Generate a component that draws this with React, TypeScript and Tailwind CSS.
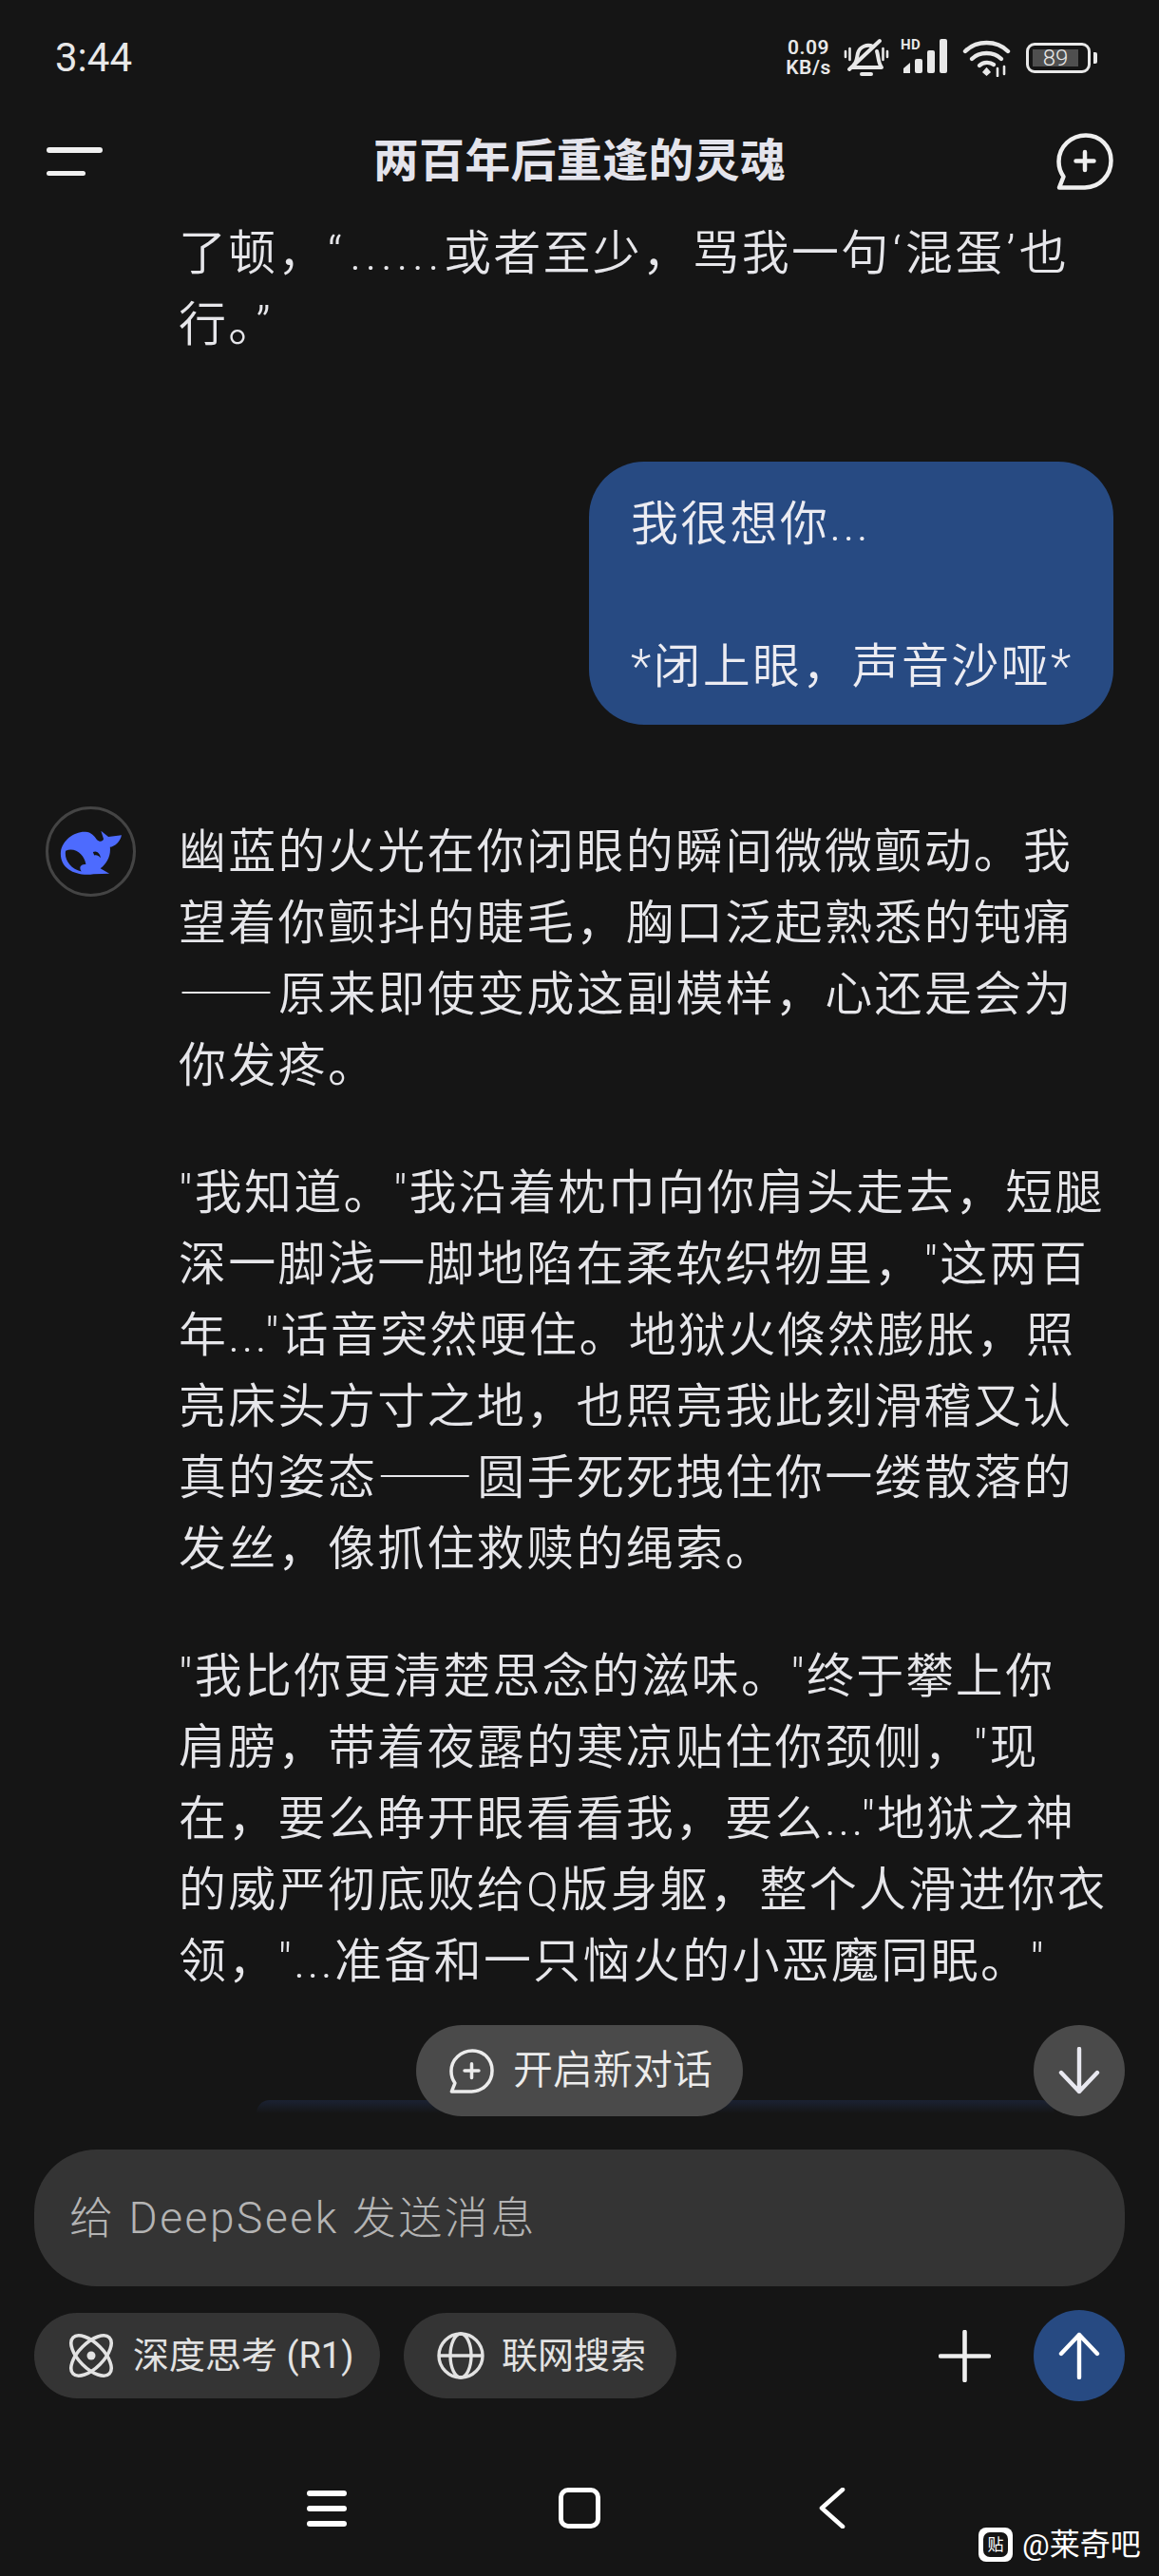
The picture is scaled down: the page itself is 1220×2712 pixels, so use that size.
const font = { fontFamily: 'Roboto, "Noto Sans CJK SC", sans-serif' };

// dashes come from the CJK font so they join up the way they do in the app
const Dash = () => <span className="font-['Noto_Sans_CJK_SC'] leading-[0] tracking-normal mr-[5px]">——</span>;

const paragraphs = [
  [
    '幽蓝的火光在你闭眼的瞬间微微颤动。我',
    '望着你颤抖的睫毛，胸口泛起熟悉的钝痛',
    <>
      <Dash />
      原来即使变成这副模样，心还是会为
    </>,
    '你发疼。',
  ],
  [
    '"我知道。"我沿着枕巾向你肩头走去，短腿',
    '深一脚浅一脚地陷在柔软织物里，"这两百',
    '年..."话音突然哽住。地狱火倏然膨胀，照',
    '亮床头方寸之地，也照亮我此刻滑稽又认',
    <>
      真的姿态
      <Dash />
      圆手死死拽住你一缕散落的
    </>,
    '发丝，像抓住救赎的绳索。',
  ],
  [
    '"我比你更清楚思念的滋味。"终于攀上你',
    '肩膀，带着夜露的寒凉贴住你颈侧，"现',
    '在，要么睁开眼看看我，要么..."地狱之神',
    '的威严彻底败给Q版身躯，整个人滑进你衣',
    '领，"...准备和一只恼火的小恶魔同眠。"',
  ],
];

const ChatPlus = ({ className }: { className: string }) => (
  <svg className={className} viewBox="0 0 60 60" fill="none" stroke="currentColor" strokeWidth="4.5" strokeLinecap="round" strokeLinejoin="round">
    <path d="M31 2.5C46 2.5 57.5 14 57.5 29C57.5 44.5 46 57 30 57.5H3L7.5 46C4 41 2.5 35.5 2.5 30C2.5 14.5 15.5 2.5 31 2.5Z" />
    <path d="M30 20V39M20.5 29.5H39.5" />
  </svg>
);

const StatusIcons = () => (
  <div className="flex items-center h-[42px] text-[#e8e8e8]">
    <div className="w-[52px] text-[21px] leading-[21px] font-semibold tracking-[0.5px] text-center">
      <div>0.09</div>
      <div>KB/s</div>
    </div>
    <svg className="ml-[11px] w-[48px] h-[42px]" viewBox="0 0 48 42" fill="none" stroke="currentColor" strokeWidth="4" strokeLinecap="round" strokeLinejoin="round">
      <path d="M11 28C14 25 14 20 15 16C17 9 25 6 31 9M35 14C37 20 36 26 40 31H9M19 38H29" />
      <path d="M6 33L38 3" />
      <path d="M2 14V20M6.5 11V23M41.5 11V23M46 14V20" strokeWidth="2.6" />
    </svg>
    <div className="relative ml-[12px] w-[55px] h-[42px]">
      <span className="absolute left-0 top-[0px] text-[15px] leading-[15px] font-bold tracking-[0.5px]">HD</span>
      <svg className="absolute left-0 top-0 w-[55px] h-[42px]" viewBox="0 0 55 42" fill="currentColor">
        <path d="M3 32L10 26V37H3Z" />
        <rect x="15" y="22" width="8" height="15" rx="2" />
        <rect x="28" y="13" width="8" height="24" rx="2" />
        <rect x="41" y="1" width="8" height="36" rx="2" />
      </svg>
    </div>
    <svg className="ml-[10px] w-[52px] h-[40px]" viewBox="0 0 52 40" fill="none" stroke="currentColor" strokeWidth="4.4" strokeLinecap="round">
      <path d="M3 13C15 1 36 1 48 13" />
      <path d="M10 21C18 13 33 13 41 21" />
      <path d="M18 28C22 24 29 24 33 27" />
      <path d="M22 35L25.5 31L29 35L25.5 38Z" fill="currentColor" strokeWidth="1.5" />
      <path d="M37 31V39M44 29V37" strokeWidth="2.6" />
    </svg>
    <div className="ml-[15px] flex items-center">
      <div className="w-[68px] h-[32px] rounded-[9px] border-[3px] border-[#e8e8e8] p-[4px] flex">
        <div className="w-[48px] bg-[#4f4f4f] text-[24px] leading-[18px] text-center text-[#e8e8e8] font-light">89</div>
      </div>
      <div className="ml-[3px] w-[4px] h-[12px] rounded-r-[2px] bg-[#e8e8e8]" />
    </div>
  </div>
);

const Whale = () => (
  <svg className="w-[66px] h-[48px]" viewBox="195 160 195 140" preserveAspectRatio="none" fill="#4d6bfe">
    <path
      fillRule="evenodd"
      d="M198 228C203 194 240 166 275 168C292 169 302 180 310 192C318 200 329 198 331 190L323 165L346 183L387 178C382 200 366 212 351 215C354 240 342 266 321 280L349 296L300 298C246 306 192 282 198 228ZM213 226C208 254 228 282 262 290C254 278 258 268 276 268C272 240 244 214 213 226ZM298 230C310 224 320 234 322 248C316 240 308 238 302 240Z"
    />
  </svg>
);

const Atom = () => (
  <svg className="w-[48px] h-[50px]" viewBox="0 0 48 48" fill="none" stroke="currentColor" strokeWidth="3.6">
    <ellipse cx="24" cy="24" rx="27" ry="13" transform="rotate(45 24 24)" />
    <ellipse cx="24" cy="24" rx="27" ry="13" transform="rotate(-45 24 24)" />
    <circle cx="24" cy="24" r="4.5" fill="currentColor" stroke="none" />
  </svg>
);

const Globe = () => (
  <svg className="w-[50px] h-[50px]" viewBox="0 0 50 50" fill="none" stroke="currentColor" strokeWidth="3.4">
    <circle cx="25" cy="25" r="23" />
    <ellipse cx="25" cy="25" rx="11" ry="23" />
    <path d="M3 25H47" />
  </svg>
);

export default function App() {
  return (
    <div lang="zh-CN" style={font} className="h-[2712px] w-[1220px] flex flex-col overflow-hidden bg-[#151515] text-[#e6e6ea] relative">
      <div className="h-[120px] shrink-0 flex items-start justify-between pt-[40px] pl-[58px] pr-[65px]">
        <span className="text-[42px] leading-[42px] text-[#e8e8e8]">3:44</span>
        <StatusIcons />
      </div>

      <div className="h-[108px] shrink-0 relative flex items-start justify-center pt-[20px]">
        <div className="absolute left-[49px] top-[35px] flex flex-col gap-[19px]">
          <div className="w-[59px] h-[6px] rounded-full bg-[#f0f0f0]" />
          <div className="w-[41px] h-[5px] rounded-full bg-[#f0f0f0]" />
        </div>
        <h1 className="text-[48px] leading-[60px] font-bold tracking-[0.3px] text-[#e4e4ec]">两百年后重逢的灵魂</h1>
        <div className="absolute left-[1112px] top-[20px] text-[#efefef]">
          <ChatPlus className="w-[60px] h-[60px]" />
        </div>
      </div>

      <div className="flex-1 relative overflow-hidden pt-[2px] text-[50px] leading-[75px] tracking-[2.3px] font-[350]">
        <div className="pl-[188px]">
          <div className="whitespace-nowrap">
            了顿，“<span className="ml-[6px] tracking-[4.5px]">......</span>或者至少，骂我一句<span className="mx-[2px]">‘</span>混蛋<span className="mx-[2px]">’</span>也
          </div>
          <div>行。<span className="ml-[2px]">”</span></div>
        </div>

        <div className="mt-[106px] flex justify-end pr-[48px]">
          <div className="w-[552px] h-[277px] rounded-[58px] bg-[#274a82] pl-[44px] pt-[29px] text-[#ececf2]">
            <div>我很想你...</div>
            <div className="h-[75px]" />
            <div className="whitespace-nowrap">*闭上眼，声音沙哑*</div>
          </div>
        </div>

        <div className="mt-[96px] flex pl-[48px] gap-[45px]">
          <div className="-mt-[10px] w-[95px] h-[95px] shrink-0 rounded-full border-[3px] border-[#444] flex items-center justify-center">
            <Whale />
          </div>
          <div className="pt-[1px] flex flex-col gap-[59px]">
            {paragraphs.map((lines, i) => (
              <div key={i}>
                {lines.map((line, j) => (
                  <div key={j} className="whitespace-nowrap">
                    {line}
                  </div>
                ))}
              </div>
            ))}
          </div>
        </div>

        <div className="absolute left-[270px] top-[1983px] w-[840px] h-[14px] rounded-t-[14px] bg-gradient-to-b from-[#1b2233] to-[#151515]" />

        <div className="absolute left-[438px] top-[1904px] w-[344px] h-[96px] rounded-full bg-[#4a4a4a] flex items-center pl-[35px] gap-[20px] text-[#ececec] tracking-normal">
          <ChatPlus className="w-[47px] h-[47px]" />
          <span className="text-[42px] leading-[50px]">开启新对话</span>
        </div>
        <div className="absolute left-[1088px] top-[1904px] w-[96px] h-[96px] rounded-full bg-[#4a4a4a] flex items-center justify-center text-[#e8e8f0]">
          <svg className="w-[44px] h-[50px]" viewBox="0 0 44 50" fill="none" stroke="currentColor" strokeWidth="4.4" strokeLinecap="round" strokeLinejoin="round">
            <path d="M22 2V47M3 27L22 47L41 27" />
          </svg>
        </div>
      </div>

      <div className="shrink-0 h-[449px] relative px-[36px]">
        <div className="h-[144px] rounded-[66px] bg-[#343434] flex items-center pl-[37px] text-[46px] tracking-[2.6px] font-light text-[#b4b4b4]">
          给 DeepSeek 发送消息
        </div>

        <div className="mt-[25px] h-[96px] flex items-center">
          <div className="h-[90px] w-[364px] rounded-full bg-[#343434] flex items-center pl-[36px] gap-[20px] text-[#e2e2e2]">
            <Atom />
            <span className="text-[38px] leading-[46px] whitespace-nowrap">深度思考 (R1)</span>
          </div>
          <div className="ml-[25px] h-[90px] w-[287px] rounded-full bg-[#343434] flex items-center pl-[35px] gap-[18px] text-[#e2e2e2]">
            <Globe />
            <span className="text-[38px] leading-[46px] whitespace-nowrap">联网搜索</span>
          </div>
          <svg className="ml-auto w-[55px] h-[55px] text-[#eeeeee]" viewBox="0 0 55 55" fill="none" stroke="currentColor" strokeWidth="4.6" strokeLinecap="round">
            <path d="M27.5 2V53M2 27.5H53" />
          </svg>
          <div className="ml-[45px] w-[96px] h-[96px] rounded-full bg-[#274a82] flex items-center justify-center text-white">
            <svg className="w-[44px] h-[50px]" viewBox="0 0 44 50" fill="none" stroke="currentColor" strokeWidth="4.4" strokeLinecap="round" strokeLinejoin="round">
              <path d="M22 48V3M3 23L22 3L41 23" />
            </svg>
          </div>
        </div>

        <div className="mt-[91px] ml-[287px] flex items-center text-white">
          <div className="w-[42px] flex flex-col gap-[10px]">
            <div className="h-[6px] rounded-full bg-white" />
            <div className="h-[6px] rounded-full bg-white" />
            <div className="h-[6px] rounded-full bg-white" />
          </div>
          <div className="ml-[223px] w-[44px] h-[43px] rounded-[10px] border-[5px] border-white" />
          <svg className="ml-[230px] w-[28px] h-[43px]" viewBox="0 0 28 43" fill="none" stroke="currentColor" strokeWidth="4.6" strokeLinecap="round" strokeLinejoin="round">
            <path d="M25 2L3 21.5L25 41" />
          </svg>
        </div>

        <div className="absolute left-[1030px] top-[398px] flex items-center gap-[10px] text-white">
          <div className="w-[36px] h-[36px] rounded-[8px] bg-white flex items-center justify-center">
            <div className="w-[26px] h-[26px] rounded-[7px] bg-[#151515] text-[17px] leading-[26px] text-center text-white">贴</div>
          </div>
          <span className="text-[32px] leading-[36px] whitespace-nowrap">@莱奇吧</span>
        </div>
      </div>
    </div>
  );
}
